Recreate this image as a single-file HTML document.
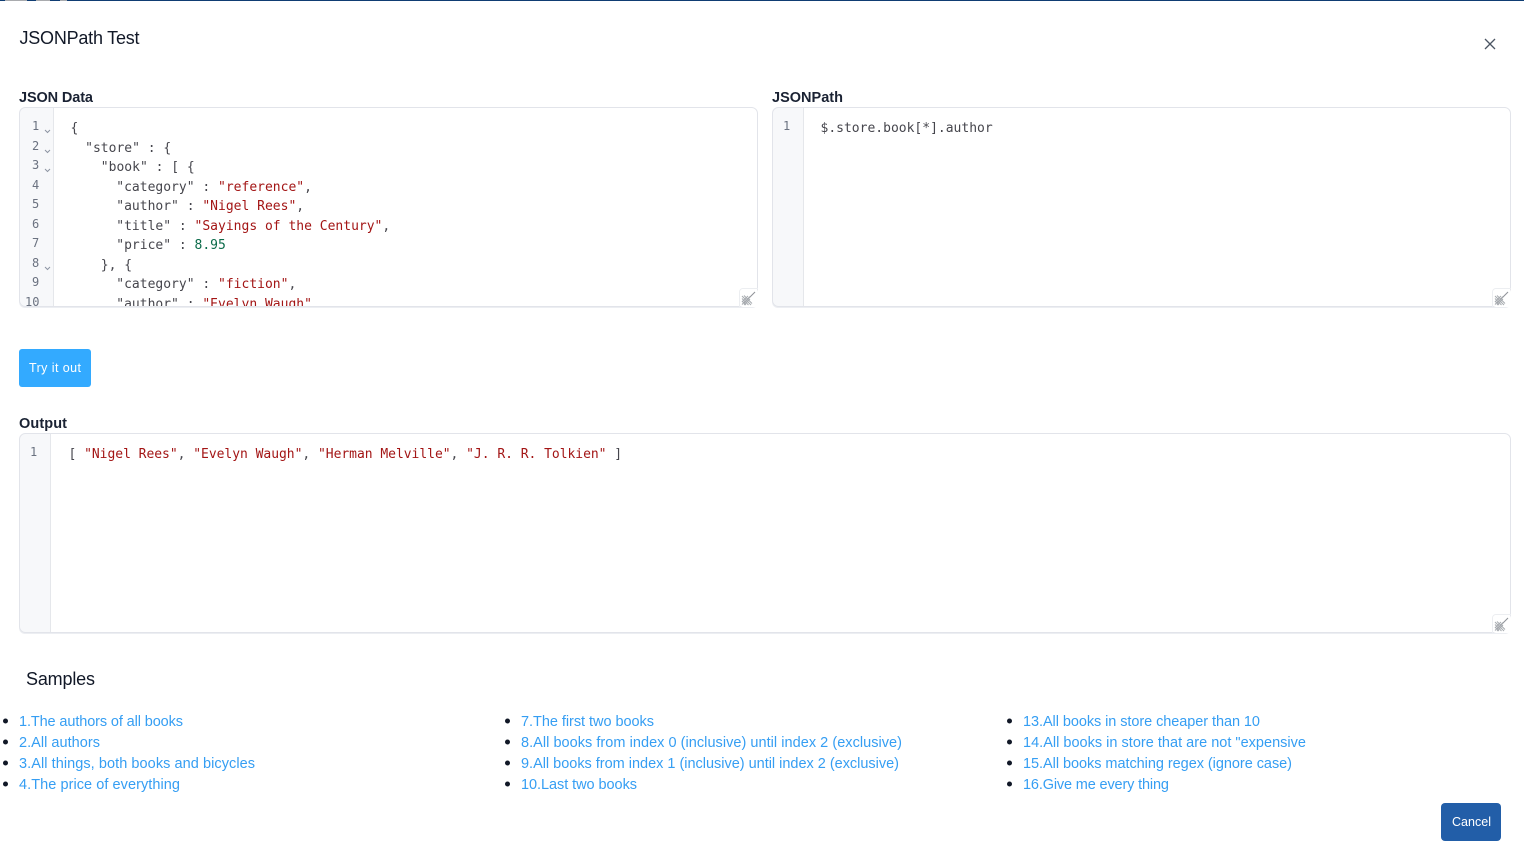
<!DOCTYPE html>
<html lang="en">
<head>
<meta charset="utf-8">
<title>JSONPath Test</title>
<style>
html,body{margin:0;padding:0;background:#fff;width:1524px;height:862px;overflow:hidden}
svg{display:block}
text{white-space:pre}
.s{font-family:"Liberation Sans",sans-serif}
.m{font-family:"DejaVu Sans Mono","Liberation Mono",monospace;font-size:13px;fill:#46464d}
.n{font-family:"DejaVu Sans Mono","Liberation Mono",monospace;font-size:12px;fill:#6b7280}
.r{fill:#a31515}
.g{fill:#0b6b4a}
.l{font-family:"Liberation Sans",sans-serif;font-size:14.5px;fill:#359ef3}
.b{font-family:"Liberation Sans",sans-serif;font-size:14.5px;font-weight:700;fill:#1a2233}
.h{font-family:"Liberation Sans",sans-serif;font-size:18px;fill:#111827}
.f{fill:none;stroke:#8d95a3;stroke-width:1}
</style>
</head>
<body>
<svg width="1524" height="862" viewBox="0 0 1524 862" xmlns="http://www.w3.org/2000/svg">
<defs>
<clipPath id="c1"><rect x="19" y="107" width="739" height="199.5" rx="6"/></clipPath>
<clipPath id="c2"><rect x="772" y="107" width="739" height="199.5" rx="6"/></clipPath>
<clipPath id="c3"><rect x="19" y="433" width="1492" height="199.5" rx="6"/></clipPath>
<g id="rz">
<path d="M0.5 19V4a3.5 3.5 0 0 1 3.5-3.500H19" fill="#fff" stroke="#eceef1"/>
<rect x="1" y="1" width="18" height="18" rx="3" fill="#fff"/>
<path d="M16 4L5 15" stroke="#8f9399" stroke-width="1.100" fill="none"/>
<path d="M3 8l9 9M3 10.500l6.500 6.500M5 7.500l8 8M3 13l4 4M3 16.500l8-8M3 14l6-6M5 17l6-6" stroke="#a6aaaf" stroke-width="1" fill="none"/>
</g>
</defs>

<rect width="1524" height="862" fill="#fff"/>
<rect width="1524" height="1" fill="#0f3d73"/>
<rect x="5" width="22" height="1" fill="#a9abae"/>
<rect x="36" width="14" height="1" fill="#a9abae"/>
<rect x="60" width="7" height="1" fill="#a9abae"/>

<text class="h" x="19.500" y="44" textLength="120" lengthAdjust="spacing">JSONPath Test</text>
<path d="M1485 39l10 10M1495 39l-10 10" stroke="#4b5563" stroke-width="1.300" fill="none"/>

<text class="b" x="19" y="102" textLength="74" lengthAdjust="spacing">JSON Data</text>
<text class="b" x="772" y="102" textLength="71" lengthAdjust="spacing">JSONPath</text>

<!-- left editor -->
<rect x="19" y="108" width="739" height="200" rx="6" fill="#eceef2"/>
<rect x="19" y="107" width="739" height="199.500" rx="6" fill="#fff"/>
<g clip-path="url(#c1)">
<rect x="19" y="107" width="34" height="200" fill="#f7f8fa"/>
<rect x="53" y="107" width="1" height="200" fill="#e5e7eb"/>
<text class="n" x="32" y="130">1</text>
<text class="n" x="32" y="150">2</text>
<text class="n" x="32" y="169">3</text>
<text class="n" x="32" y="189">4</text>
<text class="n" x="32" y="208">5</text>
<text class="n" x="32" y="228">6</text>
<text class="n" x="32" y="247">7</text>
<text class="n" x="32" y="267">8</text>
<text class="n" x="32" y="286">9</text>
<text class="n" x="25" y="306">10</text>
<path class="f" d="M45 130l2.500 2.500L50 130M45 150l2.500 2.500L50 150M45 169l2.500 2.500L50 169M45 267l2.500 2.500L50 267"/>
<text class="m" x="70.500" y="132">{</text>
<text class="m" x="69.500" y="152">  "store" : {</text>
<text class="m" x="69.500" y="171">    "book" : [ {</text>
<text class="m" x="69.300" y="191">      "category" : <tspan class="r">"reference"</tspan>,</text>
<text class="m" x="69.300" y="210">      "author" : <tspan class="r">"Nigel Rees"</tspan>,</text>
<text class="m" x="69.300" y="230">      "title" : <tspan class="r">"Sayings of the Century"</tspan>,</text>
<text class="m" x="69.300" y="249">      "price" : <tspan class="g">8.95</tspan></text>
<text class="m" x="69.500" y="269">    }, {</text>
<text class="m" x="69.300" y="288">      "category" : <tspan class="r">"fiction"</tspan>,</text>
<text class="m" x="69.300" y="308">      "author" : <tspan class="r">"Evelyn Waugh"</tspan>,</text>
</g>
<rect x="19.500" y="107.500" width="738" height="199" rx="6" fill="none" stroke="#e2e4ea"/>
<use href="#rz" x="739" y="288"/>

<!-- right editor -->
<rect x="772" y="108" width="739" height="200" rx="6" fill="#eceef2"/>
<rect x="772" y="107" width="739" height="199.500" rx="6" fill="#fff"/>
<g clip-path="url(#c2)">
<rect x="772" y="107" width="31" height="200" fill="#f7f8fa"/>
<rect x="803" y="107" width="1" height="200" fill="#e5e7eb"/>
<text class="n" x="783" y="130">1</text>
<text class="m" x="820.500" y="132">$.store.book[*].author</text>
</g>
<rect x="772.500" y="107.500" width="738" height="199" rx="6" fill="none" stroke="#e2e4ea"/>
<use href="#rz" x="1492" y="288"/>

<!-- try -->
<rect x="19" y="349" width="72" height="38" rx="3" fill="#33aaff"/>
<text class="s" x="29" y="372" font-size="12.500" fill="#fff" textLength="52" lengthAdjust="spacing">Try it out</text>

<text class="b" x="19" y="428" textLength="48" lengthAdjust="spacing">Output</text>

<!-- output -->
<rect x="19" y="434" width="1492" height="200" rx="6" fill="#eceef2"/>
<rect x="19" y="433" width="1492" height="199.500" rx="6" fill="#fff"/>
<g clip-path="url(#c3)">
<rect x="19" y="433" width="31" height="200" fill="#f7f8fa"/>
<rect x="50" y="433" width="1" height="200" fill="#e5e7eb"/>
<text class="n" x="30" y="456">1</text>
<text class="m" x="68.500" y="458" style="letter-spacing:-0.03px">[ <tspan class="r">"Nigel Rees"</tspan>, <tspan class="r">"Evelyn Waugh"</tspan>, <tspan class="r">"Herman Melville"</tspan>, <tspan class="r">"J. R. R. Tolkien"</tspan> ]</text>
</g>
<rect x="19.500" y="433.500" width="1491" height="199" rx="6" fill="none" stroke="#e2e4ea"/>
<use href="#rz" x="1492" y="614"/>

<!-- samples -->
<text class="h" x="26" y="685" textLength="69" lengthAdjust="spacing">Samples</text>

<g fill="#111827">
<circle cx="5.500" cy="721" r="2.500"/><circle cx="5.500" cy="742" r="2.500"/><circle cx="5.500" cy="763" r="2.500"/><circle cx="5.500" cy="784" r="2.500"/>
<circle cx="507.500" cy="721" r="2.500"/><circle cx="507.500" cy="742" r="2.500"/><circle cx="507.500" cy="763" r="2.500"/><circle cx="507.500" cy="784" r="2.500"/>
<circle cx="1009.500" cy="721" r="2.500"/><circle cx="1009.500" cy="742" r="2.500"/><circle cx="1009.500" cy="763" r="2.500"/><circle cx="1009.500" cy="784" r="2.500"/>
</g>

<text class="l" x="19" y="726" textLength="164" lengthAdjust="spacing">1.The authors of all books</text>
<text class="l" x="19" y="747" textLength="81" lengthAdjust="spacing">2.All authors</text>
<text class="l" x="19" y="768" textLength="236" lengthAdjust="spacing">3.All things, both books and bicycles</text>
<text class="l" x="19" y="789" textLength="161" lengthAdjust="spacing">4.The price of everything</text>

<text class="l" x="521" y="726" textLength="133" lengthAdjust="spacing">7.The first two books</text>
<text class="l" x="521" y="747" textLength="381" lengthAdjust="spacing">8.All books from index 0 (inclusive) until index 2 (exclusive)</text>
<text class="l" x="521" y="768" textLength="378" lengthAdjust="spacing">9.All books from index 1 (inclusive) until index 2 (exclusive)</text>
<text class="l" x="521" y="789" textLength="116" lengthAdjust="spacing">10.Last two books</text>

<text class="l" x="1023" y="726" textLength="237" lengthAdjust="spacing">13.All books in store cheaper than 10</text>
<text class="l" x="1023" y="747" textLength="283" lengthAdjust="spacing">14.All books in store that are not "expensive</text>
<text class="l" x="1023" y="768" textLength="269" lengthAdjust="spacing">15.All books matching regex (ignore case)</text>
<text class="l" x="1023" y="789" textLength="146" lengthAdjust="spacing">16.Give me every thing</text>

<!-- cancel -->
<rect x="1441" y="803" width="60" height="38" rx="4" fill="#225ea8"/>
<text class="s" x="1452" y="826" font-size="12.500" fill="#fff" textLength="39" lengthAdjust="spacing">Cancel</text>
</svg>
</body>
</html>
